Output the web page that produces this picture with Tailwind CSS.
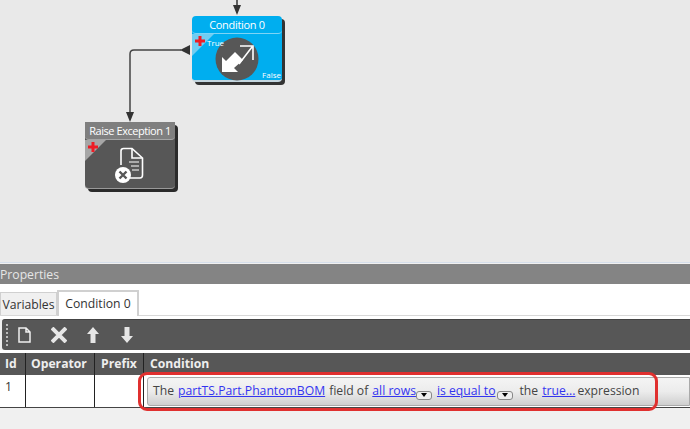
<!DOCTYPE html>
<html lang="en">
<head>
    <meta charset="UTF-8">
    <title>Workflow designer</title>
    <script src="https://cdn.jsdelivr.net/npm/@tailwindcss/browser@4"></script>
</head>
<body class="w-[690px] h-[429px] overflow-hidden bg-[#f0f0f0] font-['Open_Sans',sans-serif] text-[12.2px]">

    <!-- canvas -->
    <div class="relative h-[263px] bg-[#e9e9e9] border-b border-[#d5deea]">
        <svg class="absolute left-0 top-0" width="690" height="263" fill="none">
            <path d="M237 0V6" stroke="#333" stroke-width="1.5"/>
            <path d="M233 5H241L237 15Z" fill="#333"/>
            <path d="M181 50H134Q130 50 130 54V113" stroke="#444" stroke-width="1.5"/>
            <path d="M190 45V55L180 50Z" fill="#333"/>
            <path d="M126 112H134L130 122Z" fill="#333"/>
        </svg>

        <!-- condition node -->
        <div class="absolute left-[192px] top-[16px] w-[90px] h-[66px] rounded-[4px] bg-[#00aeef] border-b-2 border-[#c4d6df] shadow-[3px_3px_0_#333]">
            <div class="h-[18px] border-b border-[#7fd4f5] rounded-b-[4px] text-center text-white text-[11px] tracking-[-0.3px] leading-[18px]">Condition 0</div>
            <div class="absolute left-0 top-[18px] w-[22px] h-[22px] bg-[#6fcdf2] [clip-path:polygon(0_0,100%_0,0_100%)]"></div>
            <svg class="absolute left-[3px] top-[20px]" width="10" height="10" viewBox="0 0 10 10"><path d="M3.5 0H6.5V3.5H10V6.5H6.5V10H3.5V6.5H0V3.5H3.5Z" fill="#ed1c24"/></svg>
            <svg class="absolute left-[23px] top-[21px]" width="44" height="44" viewBox="0 0 44 44">
                <circle cx="22" cy="22" r="21.5" fill="#575757"/>
                <path d="M7 35V20L11 24L20 15L28 23L19 31L23 35Z" fill="#fff"/>
                <path d="M25 9H38V23M37 10L24 27" stroke="#fff" stroke-width="1.6" fill="none"/>
            </svg>
            <span class="absolute left-[15px] top-[21px] text-white text-[8px] leading-[11px]">True</span>
            <span class="absolute right-[1px] bottom-[0px] text-white text-[8px] leading-[11px]">False</span>
        </div>

        <!-- raise exception node -->
        <div class="absolute left-[85px] top-[122px] w-[90px] h-[67px] rounded-[4px] bg-[#575757] border-b border-[#999] shadow-[3px_3px_0_#2b2b2b]">
            <div class="h-[18px] bg-[#7f7f7f] border-b border-[#a5a5a5] rounded-b-[4px] text-center text-white text-[11px] tracking-[-0.45px] leading-[18px] whitespace-nowrap">Raise Exception 1</div>
            <div class="absolute left-0 top-[18px] w-[21px] h-[21px] bg-[#a6a6a6] [clip-path:polygon(0_0,100%_0,0_100%)]"></div>
            <svg class="absolute left-[3px] top-[20px]" width="10" height="10" viewBox="0 0 10 10"><path d="M3.5 0H6.5V3.5H10V6.5H6.5V10H3.5V6.5H0V3.5H3.5Z" fill="#ed1c24"/></svg>
            <svg class="absolute left-[29px] top-[25px]" width="32" height="37" viewBox="0 0 32 37" fill="none">
                <path d="M7 18V4Q7 1.500 9.500 1.500H18L28.500 11V28Q28.500 31 26 31H16" stroke="#fff" stroke-width="1.600"/>
                <path d="M18 2V11H28" stroke="#fff" stroke-width="1.600"/>
                <path d="M15 15H25M17 19H25M18 23H25" stroke="#fff" stroke-width="1.200"/>
                <circle cx="9" cy="28" r="8" fill="#fff"/>
                <path d="M5.500 24.500L12.500 31.500M12.500 24.500L5.500 31.500" stroke="#575757" stroke-width="2.400"/>
            </svg>
        </div>
    </div>

    <!-- properties panel -->
    <div class="h-[20px] mt-[1px] bg-[#848484] text-[#e6e6e6] leading-[21px]">Properties</div>

    <div class="h-[35px] bg-white pb-[3px] flex items-end">
        <div class="flex-1 flex items-end border-b border-[#d8d8d8]">
            <div class="h-[23px] w-[57px] bg-[#f0f0f0] border border-[#d0d0d0] border-b-0 text-[#333] text-center leading-[23px]">Variables</div>
            <div class="h-[26px] w-[82px] -mb-px bg-white border-2 border-[#d0d0d0] border-b-0 text-[#333] text-center leading-[24px]">Condition 0</div>
        </div>
    </div>

    <div class="h-[31px] ml-[2px] flex items-center bg-[#575757] rounded-l-[3px] border-t border-[#444]">
        <div class="w-[2px] h-[22px] ml-[4px] border-l-2 border-dotted border-[#bbb]"></div>
        <svg class="ml-[10px]" width="13" height="16" viewBox="0 0 13 16" fill="none"><path d="M1 1H8L12 5V15H1Z M8 1V5H12" stroke="#f0f0f0" stroke-width="1.500"/></svg>
        <svg class="ml-[20px]" width="16" height="16" viewBox="0 0 16 16"><path d="M1 1L15 15M15 1L1 15" stroke="#e6e6e6" stroke-width="4"/></svg>
        <svg class="ml-[20px]" width="12" height="16" viewBox="0 0 12 16"><path d="M6 0L12 7H8.500V16H3.500V7H0Z" fill="#e6e6e6"/></svg>
        <svg class="ml-[22px]" width="12" height="16" viewBox="0 0 12 16"><path d="M6 16L12 9H8.500V0H3.500V9H0Z" fill="#e6e6e6"/></svg>
    </div>

    <!-- condition table -->
    <div class="relative pt-[3px] bg-white">
        <div class="grid grid-cols-[26px_69px_49px_1fr] h-[22px] bg-[#575757] text-[#eeeeee] font-bold leading-[22px]">
            <div class="pl-[5px] border-r border-[#222]">Id</div>
            <div class="pl-[5px] border-r border-[#222]">Operator</div>
            <div class="pl-[6px] border-r border-[#222]">Prefix</div>
            <div class="pl-[6px]">Condition</div>
        </div>
        <div class="grid grid-cols-[26px_69px_49px_1fr] h-[33px] bg-white border-b border-[#444] text-[#333]">
            <div class="pl-[5px] pt-[3px] border-r border-[#222]">1</div>
            <div class="border-r border-[#222]"></div>
            <div class="border-r border-[#222]"></div>
            <div class="pl-[3px] pt-[2px]">
                <div class="h-[29px] pl-[5px] flex items-center gap-[4px] whitespace-nowrap border border-[#aaa] rounded-l-[3px] bg-gradient-to-b from-[#f4f4f4] via-[#ececec] to-[#cfcfcf] text-[#444]">
                    <span>The</span>
                    <a class="text-[#3434f0] underline">partTS.Part.PhantomBOM</a>
                    <span>field of</span>
                    <a class="text-[#3434f0] underline">all rows</a>
                    <span class="w-[16px] h-[9px] -ml-[4px] mt-[7px] flex items-center justify-center border border-[#888] rounded-[3px] bg-[#eee]"><span class="w-0 h-0 border-x-[3px] border-t-[4px] border-x-transparent border-t-black"></span></span>
                    <a class="ml-px text-[#3434f0] underline">is equal to</a>
                    <span class="w-[16px] h-[9px] -ml-[2px] mt-[7px] flex items-center justify-center border border-[#888] rounded-[3px] bg-[#eee]"><span class="w-0 h-0 border-x-[3px] border-t-[4px] border-x-transparent border-t-black"></span></span>
                    <span class="ml-[2px]">the</span>
                    <a class="text-[#3434f0] underline">true...</a>
                    <span class="-ml-[2px]">expression</span>
                </div>
            </div>
        </div>
        <!-- red annotation -->
        <div class="absolute left-[138px] top-[22px] w-[520px] h-[39px] border-[3.5px] border-[#e0302f] rounded-[9px] pointer-events-none"></div>
    </div>

</body>
</html>
